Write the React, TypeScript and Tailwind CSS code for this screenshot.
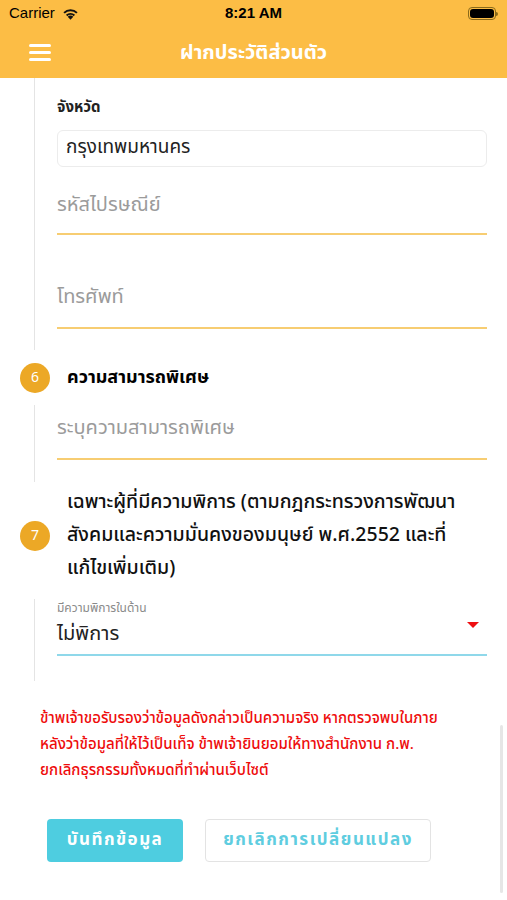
import React from "react";

const thai = { fontFamily: '"Noto Sans Thai", "Noto Sans", "DejaVu Sans", sans-serif' };

function StatusBar() {
  return (
    <div className="h-[27px] flex items-center justify-between px-[9px] text-[15px] text-black" style={{ fontFamily: '"Liberation Sans", Arial, sans-serif' }}>
      <div className="flex items-center gap-[7px] w-[120px]">
        <span>Carrier</span>
        <svg width="17" height="13" viewBox="0 0 16 12">
          <path d="M8 11.8 L5.4 9 A3.6 3.6 0 0 1 10.6 9 Z" fill="#111" />
          <path d="M3.7 7.2 A6.1 6.1 0 0 1 12.3 7.2 L11 8.5 A4.3 4.3 0 0 0 5 8.5 Z" fill="#111" />
          <path d="M1.3 4.8 A9.5 9.5 0 0 1 14.7 4.8 L13.4 6.1 A7.7 7.7 0 0 0 2.6 6.1 Z" fill="#111" />
        </svg>
      </div>
      <span className="font-bold">8:21 AM</span>
      <div className="w-[120px] flex justify-end">
        <div className="flex items-center">
          <div className="w-[28px] h-[13px] rounded-[4px] border border-[#8a6a1a] p-[1px]">
            <div className="w-full h-full rounded-[3px] bg-black" />
          </div>
          <div className="w-[2px] h-[4px] bg-[#8a6a1a] rounded-r" />
        </div>
      </div>
    </div>
  );
}

function Field({ placeholder, pt, h, mt }: { placeholder: string; pt: string; h: string; mt: string }) {
  return (
    <div className={`${mt} ${h} ${pt} border-b-2 border-[#f7cd72]`}>
      <div className="text-[20px] leading-[26px] text-[#9b9b9b]">{placeholder}</div>
    </div>
  );
}

export default function App() {
  return (
    <div className="relative w-[507px] h-[900px] overflow-hidden bg-white" style={thai}>
      <div className="bg-[#fcbd45]">
        <StatusBar />
        <div className="h-[51px] flex items-center relative">
          <div className="pl-[29px] flex flex-col gap-[4px]">
            <div className="w-[22px] h-[3px] bg-white rounded" />
            <div className="w-[22px] h-[3px] bg-white rounded" />
            <div className="w-[22px] h-[3px] bg-white rounded" />
          </div>
          <div className="absolute inset-0 flex items-center justify-center text-white text-[20px] font-bold">
            ฝากประวัติส่วนตัว
          </div>
        </div>
      </div>

      {/* block A */}
      <div className="ml-[34px] border-l border-[#e4e4e4] pl-[22px] pr-[20px] pt-[20px] pb-[21px]">
        <div className="text-[15px] leading-[20px] font-bold text-[#222]">จังหวัด</div>
        <div className="mt-[12px] h-[37px] border border-[#ececec] rounded-[6px] flex items-center px-[8px] text-[19px] text-[#222]">
          กรุงเทพมหานคร
        </div>
        <Field placeholder="รหัสไปรษณีย์" mt="mt-[16px]" h="h-[52px]" pt="pt-[9px]" />
        <Field placeholder="โทรศัพท์" mt="mt-[42px]" h="h-[52px]" pt="pt-[7px]" />
      </div>

      {/* section 6 */}
      <div className="h-[55px] flex items-center">
        <div className="ml-[20px] w-[30px] h-[30px] rounded-full bg-[#eca826] text-white text-[14px] flex items-center justify-center">6</div>
        <div className="ml-[17px] text-[18px] font-bold text-black">ความสามารถพิเศษ</div>
      </div>

      <div className="ml-[34px] border-l border-[#e4e4e4] pl-[22px] pr-[20px] pb-[22px]">
        <Field placeholder="ระบุความสามารถพิเศษ" mt="mt-0" h="h-[55px]" pt="pt-[10px]" />
      </div>

      {/* section 7 */}
      <div className="flex items-center pt-[4px] pb-[14px]">
        <div className="ml-[20px] w-[30px] h-[30px] rounded-full bg-[#eca826] text-white text-[14px] flex items-center justify-center shrink-0">7</div>
        <div className="ml-[17px] text-[19.5px] leading-[33px] font-medium text-[#111] whitespace-nowrap">
          <div>เฉพาะผู้ที่มีความพิการ (ตามกฎกระทรวงการพัฒนา</div>
          <div>สังคมและความมั่นคงของมนุษย์ พ.ศ.2552 และที่</div>
          <div>แก้ไขเพิ่มเติม)</div>
        </div>
      </div>

      <div className="ml-[34px] border-l border-[#e4e4e4] pl-[22px] pr-[20px] pb-[25px]">
        <div className="border-b-2 border-[#8fd8ea] h-[57px] relative">
          <div className="pt-[1px] text-[12px] leading-[16px] text-[#8a8a8a]">มีความพิการในด้าน</div>
          <div className="mt-[4px] text-[20px] leading-[28px] text-[#222]">ไม่พิการ</div>
          <div className="absolute right-[8px] top-[23px] w-0 h-0 border-l-[6px] border-r-[6px] border-t-[6px] border-l-transparent border-r-transparent border-t-[#ee0f12]" />
        </div>
      </div>

      {/* disclaimer */}
      <div className="mt-[25px] pl-[40px] text-[15px] leading-[26px] font-medium text-[#ee0c0c] whitespace-nowrap">
        <div>ข้าพเจ้าขอรับรองว่าข้อมูลดังกล่าวเป็นความจริง หากตรวจพบในภาย</div>
        <div>หลังว่าข้อมูลที่ให้ไว้เป็นเท็จ ข้าพเจ้ายินยอมให้ทางสำนักงาน ก.พ.</div>
        <div>ยกเลิกธุรกรรมทั้งหมดที่ทำผ่านเว็บไซต์</div>
      </div>

      <div className="mt-[35px] pl-[47px] flex gap-[22px]">
        <button className="w-[136px] h-[43px] rounded-[4px] bg-[#4ecde0] text-white text-[17px] font-bold tracking-[1.5px]">
          บันทึกข้อมูล
        </button>
        <button className="w-[226px] h-[43px] rounded-[4px] bg-white border border-[#e3e3e3] text-[#5fcde0] text-[17px] font-bold tracking-[1.5px]">
          ยกเลิกการเปลี่ยนแปลง
        </button>
      </div>

      <div className="absolute right-[4px] top-[725px] w-[3px] h-[168px] rounded bg-[#e6e6e6]" />
    </div>
  );
}
